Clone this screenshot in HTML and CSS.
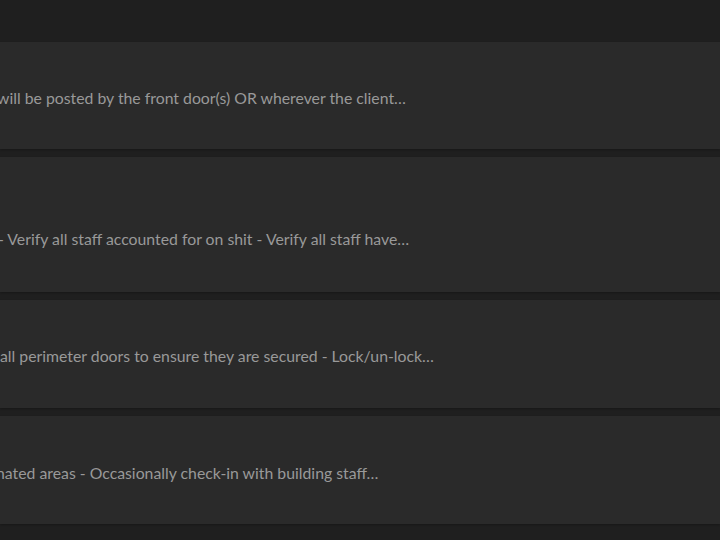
FILE: index.html
```html
<!DOCTYPE html>
<html lang="en">
<head>
<meta charset="utf-8">
<title>Post orders</title>
<link rel="stylesheet" href="styles.css">
</head>
<body>
<div class="page">
  <div class="topbar"></div>
  <ul class="list">
    <li class="card card-first">
      <p class="desc cut-w">will be posted by the front door(s) OR wherever the client…</p>
    </li>
    <li class="card card-tall">
      <p class="desc cut-dash">- Verify all staff accounted for on shit - Verify all staff have…</p>
    </li>
    <li class="card">
      <p class="desc cut-a">all perimeter doors to ensure they are secured - Lock/un-lock…</p>
    </li>
    <li class="card card-last">
      <p class="desc cut-n">nated areas - Occasionally check-in with building staff…</p>
    </li>
  </ul>
</div>
</body>
</html>
```
FILE: styles.css
```css
html, body {
  margin: 0;
  padding: 0;
  background: #1f1f1f;
  overflow: hidden;
}
body {
  width: 720px;
  height: 540px;
  font-family: Lato, "Open Sans", "Liberation Sans", sans-serif;
}
.page {
  display: flex;
  flex-direction: column;
}
.topbar {
  height: 42px;
  background: #1f1f1f;
}
.list {
  list-style: none;
  margin: 0;
  padding: 0;
  display: flex;
  flex-direction: column;
  gap: 8px;
}
.card {
  background: #2a2a2a;
  padding: 46px 0 42px 0;
  box-shadow: 0 1px 2px rgba(0, 0, 0, 0.25);
  overflow: hidden;
}
.card-first {
  padding-bottom: 41px;
}
.card-tall {
  padding-top: 72px;
  padding-bottom: 43px;
}
.card-last {
  padding-top: 47px;
  padding-bottom: 41px;
}
.desc {
  margin: 0;
  font-size: 15.8px;
  line-height: 20px;
  color: #999999;
  white-space: nowrap;
}
.cut-w { text-indent: -3px; }
.cut-dash { text-indent: -2px; }
.cut-a { text-indent: 0; }
.cut-n { text-indent: -4px; }
```
